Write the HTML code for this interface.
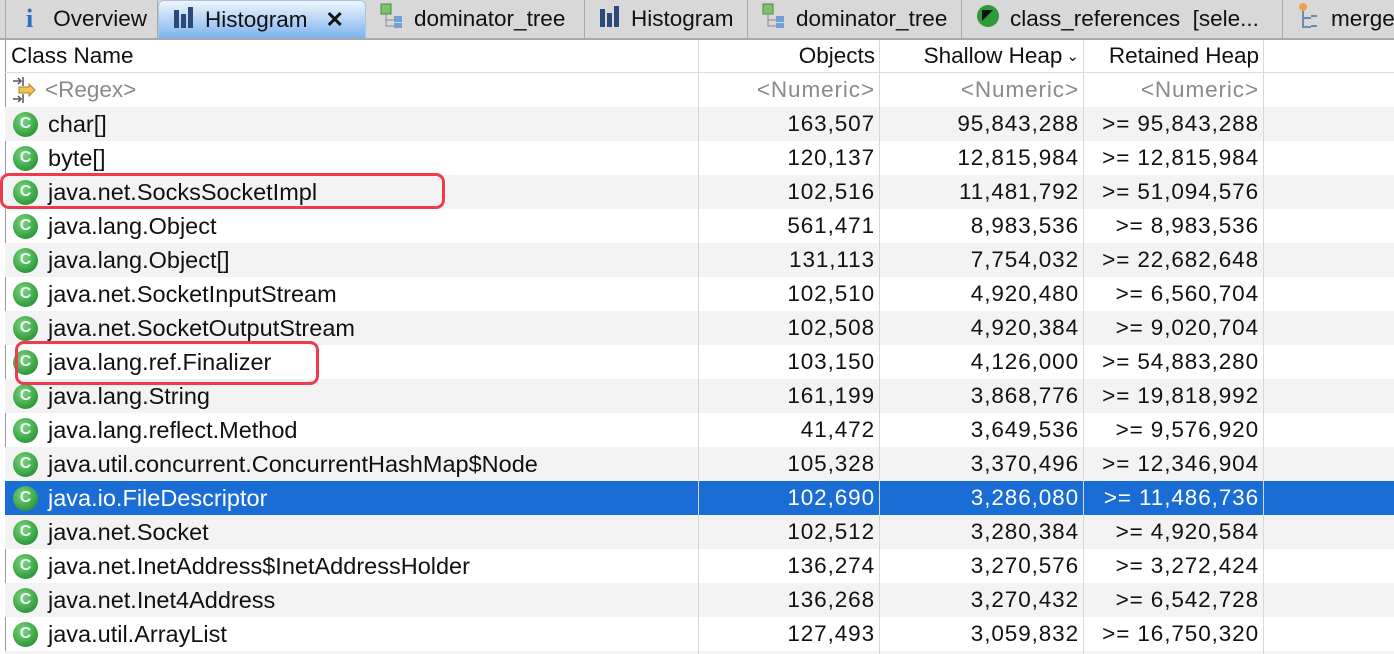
<!DOCTYPE html>
<html><head><style>
*{margin:0;padding:0;box-sizing:border-box}
html,body{width:1394px;height:654px;overflow:hidden}
body{background:#fff;font-family:"Liberation Sans",sans-serif;font-size:22.5px;color:#111;position:relative}
.tabs{position:absolute;left:0;top:0;width:1394px;height:40px;background:#d8d8d8;border-bottom:2px solid #a9a9a9}
.tab{position:absolute;top:0;height:38px;border-right:1px solid #aaa;display:flex;align-items:center;font-size:22.5px;white-space:nowrap;overflow:hidden}
.tab.act{background:linear-gradient(#f0f5fc,#7db4ee);border:1px solid #a9c4e4;border-bottom:none;border-radius:6px 6px 0 0}
.ic{display:inline-block;margin:0 10px 0 14px;flex:none}
.hdr{position:absolute;top:40px;left:5px;width:1389px;height:33px;border-bottom:1px solid #ddd}
.row{position:absolute;left:5px;width:1389px;height:34px}
.c{position:absolute;top:0;height:100%;display:flex;align-items:center;white-space:nowrap}
.c1{left:8px;width:690px;font-size:23.5px}
.n{justify-content:flex-end;letter-spacing:0.9px}
.hdr .n{letter-spacing:0}
.hdr .c1{font-size:22.5px}
.c2{left:693px;width:181px;padding-right:4px}
.c3{left:874px;width:204px;padding-right:4px}
.c4{left:1078px;width:180px;padding-right:4px}
.vl{position:absolute;top:40px;bottom:0;width:1px;background:#d8d8d8}
.cic{width:25px;height:25px;border-radius:50%;background:radial-gradient(circle at 40% 35%,#7ad87a,#35a040 65%,#1f7a2a);color:#eef;font-weight:bold;font-size:16px;display:flex;align-items:center;justify-content:center;margin:0 10px 0 0;flex:none}
.sel{background:#1a6dd4;color:#fff}
.sh{background:#f3f3f3}
.gr{color:#8a8a8a}
.box{position:absolute;border:3px solid #f03a4d;border-radius:9px}
</style></head><body>
<div class="tabs">
 <div class="tab" style="left:5px;width:153px;border-left:1px solid #aaa"><span class="ic" style="color:#2a6fc0;font-family:'Liberation Serif',serif;font-weight:bold;font-size:26px;margin-left:20px;margin-right:20px">i</span>Overview</div>
 <div class="tab act" style="left:158px;width:208px"><span class="ic"><svg width="22" height="22"><rect x="1" y="4" width="5" height="18" fill="#2b4a7a"/><rect x="8" y="8" width="5" height="14" fill="#2b4a7a"/><rect x="15" y="1" width="5" height="21" fill="#2b4a7a"/></svg></span>Histogram<span style="margin-left:18px;font-weight:bold;font-size:22px">✕</span></div>
 <div class="tab" style="left:366px;width:219px"><span class="ic"><svg width="24" height="26"><rect x="1" y="1" width="10" height="10" fill="#7cc36c" stroke="#4a8a3c"/><path d="M6 11v12h8M6 17h8" stroke="#889" fill="none"/><rect x="14" y="13" width="8" height="6" fill="#6fa0d8"/><rect x="14" y="20" width="8" height="5" fill="#6fa0d8"/></svg></span>dominator_tree</div>
 <div class="tab" style="left:585px;width:163px"><span class="ic"><svg width="22" height="22"><rect x="1" y="4" width="5" height="18" fill="#2b4a7a"/><rect x="8" y="8" width="5" height="14" fill="#2b4a7a"/><rect x="15" y="1" width="5" height="21" fill="#2b4a7a"/></svg></span>Histogram</div>
 <div class="tab" style="left:748px;width:214px"><span class="ic"><svg width="24" height="26"><rect x="1" y="1" width="10" height="10" fill="#7cc36c" stroke="#4a8a3c"/><path d="M6 11v12h8M6 17h8" stroke="#889" fill="none"/><rect x="14" y="13" width="8" height="6" fill="#6fa0d8"/><rect x="14" y="20" width="8" height="5" fill="#6fa0d8"/></svg></span>dominator_tree</div>
 <div class="tab" style="left:962px;width:321px"><span class="ic"><svg width="24" height="24"><circle cx="12" cy="12" r="11" fill="#2e9a3a"/><path d="M6 6h11l-11 11z" fill="#111"/></svg></span>class_references&nbsp; [sele...</div>
 <div class="tab" style="left:1283px;width:111px;border-right:none"><span class="ic"><svg width="24" height="28"><circle cx="6" cy="5" r="4" fill="#f0a050"/><path d="M6 9v16h8M6 16h8M14 14h6M14 24h6" stroke="#6a8ab8" fill="none" stroke-width="2"/></svg></span>merge</div>
</div>
<div style="position:absolute;left:5px;top:40px;width:1px;bottom:0;background:#999"></div>
<div class="hdr"><div class="c c1" style="left:6px">Class Name</div><div class="c c2 n">Objects</div><div class="c c3 n">Shallow Heap <span style="font-size:15px;margin-left:4px">⌄</span></div><div class="c c4 n">Retained Heap</div></div>
<div id="rows"></div>
<div class="vl" style="left:698px"></div><div class="vl" style="left:879px"></div><div class="vl" style="left:1083px"></div><div class="vl" style="left:1263px"></div>
<div class="box" style="left:0;top:173px;width:445px;height:36px"></div>
<div class="box" style="left:15px;top:341px;width:304px;height:44px"></div>
<script>
var d=[["char[]","163,507","95,843,288",">= 95,843,288"],["byte[]","120,137","12,815,984",">= 12,815,984"],["java.net.SocksSocketImpl","102,516","11,481,792",">= 51,094,576"],["java.lang.Object","561,471","8,983,536",">= 8,983,536"],["java.lang.Object[]","131,113","7,754,032",">= 22,682,648"],["java.net.SocketInputStream","102,510","4,920,480",">= 6,560,704"],["java.net.SocketOutputStream","102,508","4,920,384",">= 9,020,704"],["java.lang.ref.Finalizer","103,150","4,126,000",">= 54,883,280"],["java.lang.String","161,199","3,868,776",">= 19,818,992"],["java.lang.reflect.Method","41,472","3,649,536",">= 9,576,920"],["java.util.concurrent.ConcurrentHashMap$Node","105,328","3,370,496",">= 12,346,904"],["java.io.FileDescriptor","102,690","3,286,080",">= 11,486,736"],["java.net.Socket","102,512","3,280,384",">= 4,920,584"],["java.net.InetAddress$InetAddressHolder","136,274","3,270,576",">= 3,272,424"],["java.net.Inet4Address","136,268","3,270,432",">= 6,542,728"],["java.util.ArrayList","127,493","3,059,832",">= 16,750,320"],["","","",""]];
var h='<div class="row gr" style="top:73px"><div class="c c1" style="left:6px;font-size:22.5px"><svg width="28" height="28" style="margin-right:6px"><path d="M2 5h8M7 2l3 3-3 3M12 1v9M2 23h8M7 20l3 3-3 3M12 18v9" stroke="#556" fill="none" stroke-width="1.5"/><path d="M8 11h10v-3l6 6-6 6v-3H8z" fill="#f3c455" stroke="#b08020"/></svg>&lt;Regex&gt;</div><div class="c c2 n">&lt;Numeric&gt;</div><div class="c c3 n">&lt;Numeric&gt;</div><div class="c c4 n">&lt;Numeric&gt;</div></div>';
d.forEach(function(r,i){var t=107+34*i;var cl=i==11?"sel":(i%2==0?"sh":"");
h+='<div class="row '+cl+'" style="top:'+t+'px"><div class="c c1">'+(r[0]?'<span class="cic">C</span>':'')+r[0]+'</div><div class="c c2 n">'+r[1]+'</div><div class="c c3 n">'+r[2]+'</div><div class="c c4 n">'+r[3]+'</div></div>';});
document.getElementById("rows").innerHTML=h;
</script>
</body></html>
